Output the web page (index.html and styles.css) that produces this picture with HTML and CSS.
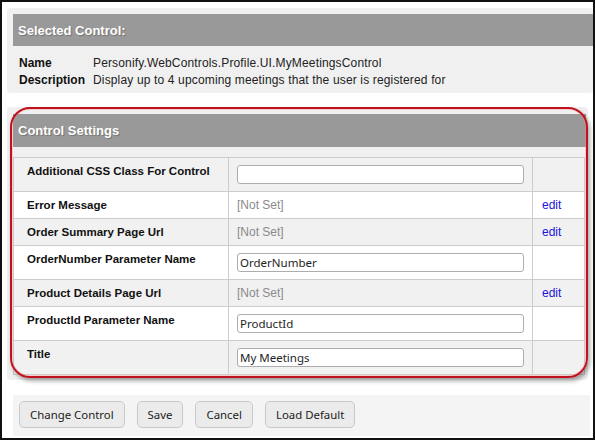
FILE: index.html
```html
<!DOCTYPE html>
<html>
<head>
<meta charset="utf-8">
<link rel="stylesheet" href="styles.css">
</head>
<body>
<div class="frame">
  <section class="panel panel-selected">
    <div class="panel-head">Selected Control:</div>
    <div class="info">
      <div class="info-key">Name</div>
      <div class="info-val">Personify.WebControls.Profile.UI.MyMeetingsControl</div>
      <div class="info-key">Description</div>
      <div class="info-val">Display up to 4 upcoming meetings that the user is registered for</div>
    </div>
  </section>

  <section class="panel panel-settings">
    <div class="panel-head">Control Settings</div>
    <table class="settings">
      <colgroup>
        <col class="c-label"><col class="c-value"><col class="c-edit">
      </colgroup>
      <tr class="row tall alt">
        <td class="label">Additional CSS Class For Control</td>
        <td class="value"><input class="field" type="text" value=""></td>
        <td class="edit"></td>
      </tr>
      <tr class="row">
        <td class="label">Error Message</td>
        <td class="value notset">[Not Set]</td>
        <td class="edit"><a href="#">edit</a></td>
      </tr>
      <tr class="row alt">
        <td class="label">Order Summary Page Url</td>
        <td class="value notset">[Not Set]</td>
        <td class="edit"><a href="#">edit</a></td>
      </tr>
      <tr class="row tall">
        <td class="label">OrderNumber Parameter Name</td>
        <td class="value"><input class="field" type="text" value="OrderNumber"></td>
        <td class="edit"></td>
      </tr>
      <tr class="row alt">
        <td class="label">Product Details Page Url</td>
        <td class="value notset">[Not Set]</td>
        <td class="edit"><a href="#">edit</a></td>
      </tr>
      <tr class="row tall">
        <td class="label">ProductId Parameter Name</td>
        <td class="value"><input class="field" type="text" value="ProductId"></td>
        <td class="edit"></td>
      </tr>
      <tr class="row tall alt">
        <td class="label">Title</td>
        <td class="value"><input class="field" type="text" value="My Meetings"></td>
        <td class="edit"></td>
      </tr>
    </table>
  </section>

  <div class="actions">
    <button class="btn">Change Control</button>
    <button class="btn">Save</button>
    <button class="btn">Cancel</button>
    <button class="btn">Load Default</button>
  </div>

  <div class="callout"></div>
</div>
</body>
</html>
```

FILE: styles.css
```css
html, body {
  margin: 0;
  padding: 0;
  background: #ffffff;
}

.frame {
  position: relative;
  width: 595px;
  height: 440px;
  box-sizing: border-box;
  border: 2px solid #111111;
  background: #ffffff;
  padding: 6px 0 0 5px;
  font-family: "Liberation Sans", Arial, sans-serif;
  font-size: 12px;
  color: #1b1b1b;
  overflow: hidden;
}

.panel {
  background: #f0f0f0;
  border-radius: 4px;
  box-sizing: border-box;
}

.panel-head {
  background: #999999;
  color: #ffffff;
  font-weight: bold;
  font-size: 13px;
  padding-left: 5px;
  text-shadow: 1px 1px 1px rgba(0, 0, 0, 0.25);
  display: flex;
  align-items: center;
}

.panel-selected {
  height: 85px;
  padding: 6px 0 0 6px;
}

.panel-selected .panel-head {
  height: 32px;
}

.info {
  display: grid;
  grid-template-columns: 74px auto;
  margin-top: 9px;
  padding-left: 6px;
  line-height: 17px;
  font-size: 12px;
}

.info-key {
  font-weight: bold;
  color: #111111;
}

.info-val {
  color: #222222;
  letter-spacing: 0.15px;
}

.panel-settings {
  margin-top: 14px;
  width: 581px;
  height: 273px;
  padding: 7px 2px 0 6px;
}

.panel-settings .panel-head {
  height: 33px;
}

.settings {
  margin-top: 10px;
  border-collapse: collapse;
  table-layout: fixed;
  width: 572px;
  font-size: 12px;
}

.c-label { width: 215px; }
.c-value { width: 304px; }
.c-edit { width: 52px; }

.settings td {
  border: 1px solid #cccccc;
  vertical-align: top;
  padding: 6px 0 0 0;
  line-height: 15px;
  box-sizing: border-box;
}

.row { height: 27px; background: #ffffff; }
.row.tall { height: 34px; }
.row.alt { background: #f1f1f1; }

.settings td.label {
  font-weight: bold;
  font-size: 11.5px;
  color: #111111;
  padding-left: 13px;
}

.settings td.value {
  padding-left: 8px;
}

.settings td.notset {
  color: #8a8a8a;
}

.settings td.edit {
  padding-left: 9px;
}

.settings td.edit a {
  color: #2211dd;
  text-decoration: none;
}

.row.tall td.value {
  padding-top: 7px;
}

.field {
  display: block;
  width: 287px;
  height: 19px;
  box-sizing: border-box;
  margin: 0;
  border: 1px solid #adadad;
  border-radius: 3px;
  background: #ffffff;
  padding: 0 2px;
  font-family: "Noto Sans", "Open Sans", sans-serif;
  font-size: 11.5px;
  color: #1e1e1e;
  outline: none;
}

.actions {
  margin: 15px 0 0 6px;
  width: 577px;
  height: 41px;
  box-sizing: border-box;
  background: #f4f4f4;
  padding: 6px 6px;
  display: flex;
  gap: 12px;
  align-items: flex-start;
}

.btn {
  height: 27px;
  box-sizing: border-box;
  margin: 0;
  padding: 0 10px;
  border: 1px solid #c9c9c9;
  border-radius: 5px;
  background: #ebebeb;
  font-family: "Noto Sans", "Open Sans", sans-serif;
  font-size: 11.4px;
  color: #1c1c1c;
  white-space: nowrap;
}

.callout {
  position: absolute;
  left: 8px;
  top: 105px;
  width: 578px;
  height: 271px;
  box-sizing: border-box;
  border: 2px solid #c0121e;
  border-radius: 20px;
  box-shadow: 2px 3px 4px rgba(0, 0, 0, 0.35), inset 0 0 0 1px rgba(255, 140, 140, 0.35);
  pointer-events: none;
}
```
